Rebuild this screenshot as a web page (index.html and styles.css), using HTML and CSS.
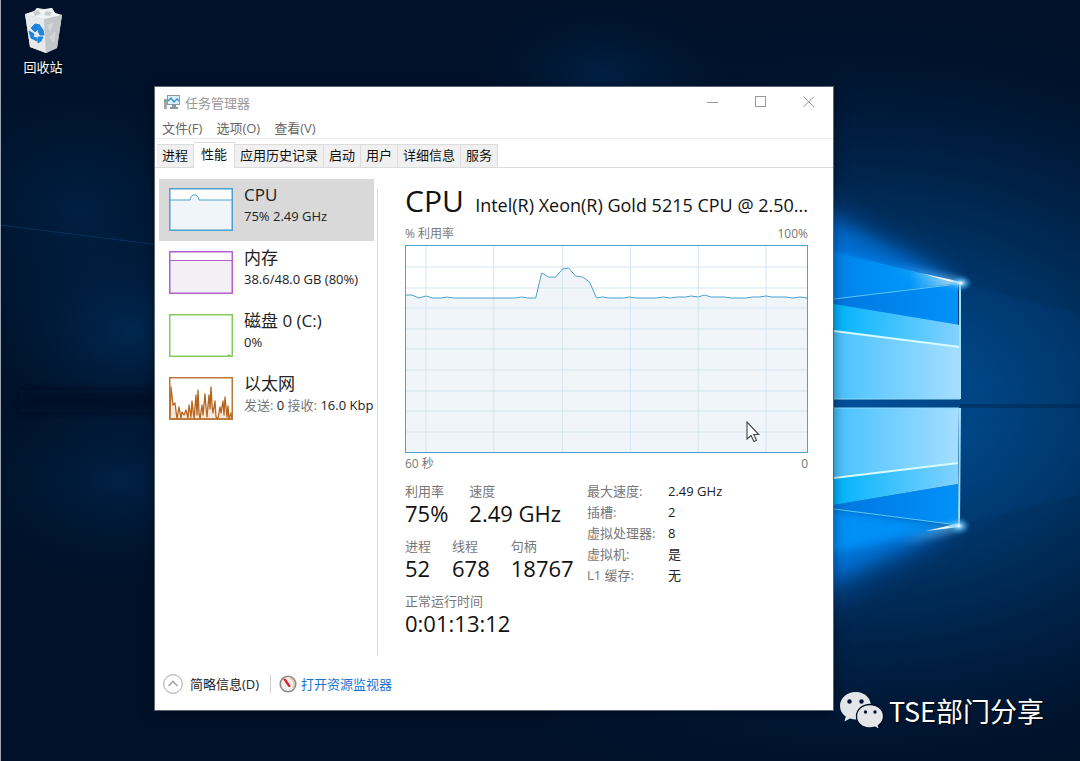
FILE: index.html
```
<!DOCTYPE html>
<html lang="zh-CN">
<head>
    <meta charset="UTF-8">
    <meta name="viewport" content="width=device-width, initial-scale=1.0">
    <title>任务管理器</title>
    <link rel="stylesheet" href="styles.css">
</head>
<body>

<div class="desktop">
    <svg class="wallpaper" viewBox="0 0 1080 761" preserveAspectRatio="xMaxYMid slice" aria-hidden="true">
        <defs>
            <radialGradient id="glow" gradientUnits="userSpaceOnUse" cx="850" cy="405" r="620" gradientTransform="translate(850 405) scale(1 .66) translate(-850 -405)">
                <stop offset="0" stop-color="#00509a"/>
                <stop offset=".2" stop-color="#004482"/>
                <stop offset=".4" stop-color="#003263"/>
                <stop offset=".7" stop-color="#001d40" stop-opacity=".8"/>
                <stop offset="1" stop-color="#001129" stop-opacity="0"/>
            </radialGradient>
            <radialGradient id="haze">
                <stop offset="0" stop-color="#003468" stop-opacity=".8"/>
                <stop offset="1" stop-color="#002040" stop-opacity="0"/>
            </radialGradient>
            <linearGradient id="pane" gradientUnits="userSpaceOnUse" x1="834" x2="960" y1="0" y2="0">
                <stop offset="0" stop-color="#48c2ff"/>
                <stop offset="1" stop-color="#a6deff"/>
            </linearGradient>
            <linearGradient id="band" gradientUnits="userSpaceOnUse" x1="834" x2="960" y1="0" y2="0">
                <stop offset="0" stop-color="#00b4fc"/>
                <stop offset="1" stop-color="#84d2ff"/>
            </linearGradient>
            <linearGradient id="deep" gradientUnits="userSpaceOnUse" x1="834" x2="960" y1="0" y2="0">
                <stop offset="0" stop-color="#0076e0"/>
                <stop offset="1" stop-color="#0092fa"/>
            </linearGradient>
            <linearGradient id="beam" x1="0" x2="1" y1="0" y2="0">
                <stop offset="0" stop-color="#0084ee"/>
                <stop offset=".6" stop-color="#00a0ff"/>
                <stop offset="1" stop-color="#d8f4ff"/>
            </linearGradient>
            <radialGradient id="spark">
                <stop offset="0" stop-color="#ffffff"/>
                <stop offset=".3" stop-color="#7fd4ff" stop-opacity=".7"/>
                <stop offset="1" stop-color="#0080e0" stop-opacity="0"/>
            </radialGradient>
            <filter id="wide" x="-40%" y="-40%" width="180%" height="180%"><feGaussianBlur stdDeviation="16"/></filter>
            <filter id="soft" x="-30%" y="-30%" width="160%" height="160%"><feGaussianBlur stdDeviation="9"/></filter>
            <filter id="soften" x="-30%" y="-30%" width="160%" height="160%"><feGaussianBlur stdDeviation="4"/></filter>
        </defs>
        <rect width="1080" height="761" fill="#001129"/>
        <rect width="1080" height="761" fill="url(#glow)"/>
        <ellipse cx="600" cy="75" rx="130" ry="80" fill="url(#haze)" opacity=".5"/>
        <ellipse cx="130" cy="330" rx="160" ry="120" fill="url(#haze)" opacity=".8"/>
        <ellipse cx="80" cy="210" rx="190" ry="150" fill="url(#haze)" opacity=".5"/>
        <ellipse cx="120" cy="480" rx="170" ry="110" fill="url(#haze)" opacity=".55"/>
        <path d="M0 225L160 245" stroke="#0a3c6c" stroke-width="1" opacity=".7"/>
        <path d="M20 390H160V412H20z" fill="#000e24" opacity=".75" filter="url(#soften)"/>
        <path d="M960 283L1080 314V495L959 525z" fill="#0058a8" opacity=".1"/>
        <path d="M960 404H1080V408H960z" fill="#00264e" opacity=".5"/>
        <!-- light spilling past the frame -->
        <path d="M760 170L950 280L760 330z" fill="#0058b0" opacity=".7" filter="url(#wide)"/>
        <path d="M760 490L950 527L760 640z" fill="#0058b0" opacity=".7" filter="url(#wide)"/>
        <path d="M780 195L957 282L780 330z" fill="#0072d8" opacity=".85" filter="url(#soft)"/>
        <path d="M780 490L955 526L780 602z" fill="#0078e0" opacity=".85" filter="url(#soft)"/>
        <path d="M790 238L961 283L790 310z" fill="#0084ee" opacity=".8" filter="url(#soften)"/>
        <path d="M790 505L959 525L790 562z" fill="#0098ff" opacity=".8" filter="url(#soften)"/>
        <path d="M834 252L961 283L834 299z" fill="url(#beam)" opacity=".75"/>
        <path d="M780 305L958 284V399H780z" fill="url(#deep)"/>
        <path d="M780 295L960 325V347L780 324z" fill="url(#band)"/>
        <path d="M780 324L960 347V399H780z" fill="url(#pane)"/>
        <path d="M780 502L958 525V484L780 514z" fill="url(#deep)"/>
        <path d="M780 485L958 463V484L780 514z" fill="url(#band)"/>
        <path d="M780 408H959L958 463L780 485z" fill="url(#pane)"/>
        <path d="M834 299L958 284M834 509L958 525" stroke="#5cc8ff" stroke-width="1"/>
        <path d="M834 331L960 347M834 478L958 463" stroke="#d6fbff" stroke-width="2"/>
        <path d="M834 399H960M834 408H959" stroke="#8fdcff" stroke-width="1"/>
        <path d="M960 283V399M960 408L959 525" stroke="#9fe0ff" stroke-width="2"/>
        <path d="M895 267L962 281V286z" fill="#c8f0ff" filter="url(#soften)" opacity=".8"/>
        <path d="M900 543L960 528V523z" fill="#c8f0ff" filter="url(#soften)" opacity=".8"/>
        <path d="M920 273L962 282V285z" fill="#e8faff"/>
        <path d="M926 531L960 527V523z" fill="#e8faff"/>
        <ellipse cx="961" cy="283" rx="12" ry="8" fill="url(#spark)"/>
        <ellipse cx="959" cy="526" rx="12" ry="9" fill="url(#spark)"/>
    </svg>

    <a class="desktop-icon" href="#">
        <svg width="40" height="46" viewBox="0 0 40 46" aria-hidden="true">
            <path d="M2 7L11 4L14 1L21 2L29 1L32 6L39 8L34 41L23 46L7 40z" fill="#d6d9dc"/>
            <path d="M2 7L21 12L23 46L7 40z" fill="#e6e8ea"/>
            <path d="M21 12L39 8L34 41L23 46z" fill="#c2c5c9"/>
            <path d="M3 7L12 4L14 1L20 3L29 1L32 6L38 8L21 12z" fill="#f2f3f4"/>
            <path d="M10 5L15 3L18 7L12 9zM23 4L29 5L27 9L21 8z" fill="#c9cdd0"/>
            <path d="M24 18L31 15L27 25zM26 30L33 24L31 36z" fill="#d3d6d9"/>
            <path d="M8 21L12 17L17 18L15 22L12 25zM17 19L20 23L21 28L17 28L15 24zM6 24L11 27L10 30L14 31V34L8 31zM15 30L20 30L18 34L15 36z" fill="#1a84dc" stroke="#1a84dc" stroke-linejoin="round"/>
        </svg>
        <span>回收站</span>
    </a>

    <main class="window">
        <header class="title-bar">
            <svg class="app-icon" width="18" height="16" viewBox="0 0 18 16" aria-hidden="true">
                <path d="M1 5H4V15H1z" fill="#a2a8ac"/>
                <path d="M1 6H3V8H1z" fill="#58b858"/>
                <rect x="4.500" y="1.500" width="12" height="9" fill="#d9f0fc" stroke="#8d979e"/>
                <path d="M5 7L8 4L11 8L14 5L16 7" fill="none" stroke="#2e93cf" stroke-width="1.300"/>
                <path d="M9 11H13V13H15V15H7V13H9z" fill="#8d979e"/>
            </svg>
            <h1>任务管理器</h1>
            <div class="window-buttons">
                <button type="button" aria-label="最小化"><svg width="12" height="12"><path d="M0 6.500H11" stroke="#999"/></svg></button>
                <button type="button" aria-label="最大化"><svg width="12" height="12"><rect x=".5" y=".5" width="10" height="10" fill="none" stroke="#999"/></svg></button>
                <button type="button" aria-label="关闭"><svg width="12" height="12"><path d="M.5 .5L11 11M11 .5L.5 11" stroke="#999"/></svg></button>
            </div>
        </header>

        <nav class="menu-bar">
            <button type="button">文件(F)</button>
            <button type="button">选项(O)</button>
            <button type="button">查看(V)</button>
        </nav>

        <div class="tabs" role="tablist">
            <button type="button" role="tab">进程</button>
            <button type="button" role="tab" class="active" aria-selected="true">性能</button>
            <button type="button" role="tab">应用历史记录</button>
            <button type="button" role="tab">启动</button>
            <button type="button" role="tab">用户</button>
            <button type="button" role="tab">详细信息</button>
            <button type="button" role="tab">服务</button>
        </div>

        <div class="content">
            <aside class="sidebar">
                <button type="button" class="resource selected">
                    <svg class="thumb" viewBox="0 0 64 43" aria-hidden="true">
                        <rect x="1" y="1" width="62" height="41" fill="#fff"/>
                        <path d="M1 12H21C22 5 29 5 30 12H63V42H1z" fill="#f0f5fa"/>
                        <path d="M1 12H21C22 5 29 5 30 12H63" fill="none" stroke="#4da0cf"/>
                        <rect x=".75" y=".75" width="62.500" height="41.500" fill="none" stroke="#4da0cf" stroke-width="1.500"/>
                    </svg>
                    <span class="resource-text">
                        <span class="name">CPU</span>
                        <span class="value">75% 2.49 GHz</span>
                    </span>
                </button>
                <button type="button" class="resource">
                    <svg class="thumb" viewBox="0 0 64 43" aria-hidden="true">
                        <rect x="1" y="9" width="62" height="33" fill="#f3f0f5"/>
                        <path d="M1 9.500H63" stroke="#b45fcb"/>
                        <rect x=".75" y=".75" width="62.500" height="41.500" fill="none" stroke="#b45fcb" stroke-width="1.500"/>
                    </svg>
                    <span class="resource-text">
                        <span class="name">内存</span>
                        <span class="value">38.6/48.0 GB (80%)</span>
                    </span>
                </button>
                <button type="button" class="resource">
                    <svg class="thumb" viewBox="0 0 64 43" aria-hidden="true">
                        <path d="M58 42L60 40L62 42z" fill="#77c04b"/>
                        <rect x=".75" y=".75" width="62.500" height="41.500" fill="none" stroke="#84cc5b" stroke-width="1.500"/>
                    </svg>
                    <span class="resource-text">
                        <span class="name">磁盘 0 (C:)</span>
                        <span class="value">0%</span>
                    </span>
                </button>
                <button type="button" class="resource">
                    <svg class="thumb" viewBox="0 0 64 43" aria-hidden="true">
                        <path d="M1 40L2 10L4 28L6 26L8 42L10 30L12 41L13 35L15 38L17 33L19 41L20 28L22 40L23 24L25 42L27 18L28 38L29 13L30 36L31 42L33 28L34 38L36 17L37 30L38 40L40 18L41 32L42 10L43 28L44 36L46 24L47 40L49 41L51 30L52 36L54 24L55 38L56 20L58 40L59 29L60 42L62 36L63 42H1z" fill="#f8e9dc" stroke="#b5651d" stroke-width="1.300" stroke-linejoin="round"/>
                        <rect x=".75" y=".75" width="62.500" height="41.500" fill="none" stroke="#bd7738" stroke-width="1.500"/>
                    </svg>
                    <span class="resource-text">
                        <span class="name">以太网</span>
                        <span class="value"><i>发送:</i> 0 <i>接收:</i> 16.0 Kbp</span>
                    </span>
                </button>
            </aside>

            <section class="detail">
                <div class="detail-head">
                    <h2>CPU</h2>
                    <p>Intel(R) Xeon(R) Gold 5215 CPU @ 2.50...</p>
                </div>
                <div class="axis"><span>% 利用率</span><span>100%</span></div>
                <div class="chart">
                    <svg viewBox="0 0 402 206" preserveAspectRatio="none" aria-label="% 利用率">
                        <path d="M0 49L6 49L13 52L20 50L27 52H35L41 51L48 52H109L116 51L122 52H130L136 27L143 31H150L157 23L163 22L170 30L177 31L184 36L191 52L197 51L204 52H218L224 51L231 52H251L258 51L265 52L272 51H280L286 50L293 51L299 49L306 51H319L326 52H341L347 51H354L361 50L367 51H381L388 52L395 51L402 52V206H0z" fill="#f0f5fa"/>
                        <path class="grid" d="M20 0V206M88 0V206M157 0V206M225 0V206M293 0V206M361 0V206M0 21H402M0 42H402M0 62H402M0 83H402M0 103H402M0 124H402M0 145H402M0 165H402M0 186H402"/>
                        <path class="line" d="M0 49L6 49L13 52L20 50L27 52H35L41 51L48 52H109L116 51L122 52H130L136 27L143 31H150L157 23L163 22L170 30L177 31L184 36L191 52L197 51L204 52H218L224 51L231 52H251L258 51L265 52L272 51H280L286 50L293 51L299 49L306 51H319L326 52H341L347 51H354L361 50L367 51H381L388 52L395 51L402 52"/>
                    </svg>
                </div>
                <div class="axis"><span>60 秒</span><span>0</span></div>

                <div class="stats">
                    <div class="counters">
                        <div class="counter-row">
                            <dl><dt>利用率</dt><dd>75%</dd></dl>
                            <dl><dt>速度</dt><dd>2.49 GHz</dd></dl>
                        </div>
                        <div class="counter-row">
                            <dl><dt>进程</dt><dd>52</dd></dl>
                            <dl><dt>线程</dt><dd>678</dd></dl>
                            <dl><dt>句柄</dt><dd>18767</dd></dl>
                        </div>
                        <div class="counter-row">
                            <dl><dt>正常运行时间</dt><dd>0:01:13:12</dd></dl>
                        </div>
                    </div>
                    <table class="specs">
                        <tr><th scope="row">最大速度:</th><td>2.49 GHz</td></tr>
                        <tr><th scope="row">插槽:</th><td>2</td></tr>
                        <tr><th scope="row">虚拟处理器:</th><td>8</td></tr>
                        <tr><th scope="row">虚拟机:</th><td>是</td></tr>
                        <tr><th scope="row">L1 缓存:</th><td>无</td></tr>
                    </table>
                </div>
            </section>
        </div>

        <footer class="status-bar">
            <button type="button" class="fewer">
                <svg width="20" height="20" viewBox="0 0 20 20" aria-hidden="true">
                    <circle cx="10" cy="10" r="9.300" fill="#fff" stroke="#a5a5a5"/>
                    <path d="M5.500 12L10 7.500L14.500 12" fill="none" stroke="#a5a5a5" stroke-width="1.600"/>
                </svg>
                简略信息(D)
            </button>
            <a class="monitor" href="#">
                <svg width="18" height="18" viewBox="0 0 18 18" aria-hidden="true">
                    <circle cx="9" cy="9" r="7.800" fill="#f1efec" stroke="#8b8b8b" stroke-width="1.600"/>
                    <path d="M11 3A6.500 6.500 0 0 1 14 13" fill="none" stroke="#e5b98a" stroke-width="1.300"/>
                    <path d="M4 4L6.500 3.500L12 11.500L9.500 12z" fill="#d8232a"/>
                </svg>
                <span>打开资源监视器</span>
            </a>
        </footer>
    </main>

    <svg class="cursor" width="14" height="22" viewBox="0 0 14 22" aria-hidden="true">
        <path d="M1 1V18L5 14.500L8 20.500L10.500 19.300L7.800 13.500H12.800z" fill="#fff" stroke="#444" stroke-width="1.100"/>
    </svg>

    <div class="watermark">
        <svg width="44" height="38" viewBox="0 0 44 38" aria-hidden="true">
            <path d="M16 0C7 0 0 6 0 14C0 18.500 2.200 22 5.800 24.500L4.500 29.500L10 26.600C12 27.200 14 27.500 16 27.500C25 27.500 31 21.500 31 14S25 0 16 0z" fill="#e4e5e9"/>
            <path d="M30 12.500C22.500 12.500 16.500 17.500 16.500 24.300S22.500 36 30 36C31.800 36 33.400 35.700 35 35.200L39.500 37.500L38.400 33.500C41.500 31.300 43.500 28 43.500 24.300C43.500 17.500 37.500 12.500 30 12.500z" fill="#e4e5e9" stroke="#000f27" stroke-width="1.300"/>
            <circle cx="9.500" cy="9.500" r="2.200" fill="#001532"/>
            <circle cx="21.500" cy="9.500" r="2.200" fill="#001532"/>
            <circle cx="25.500" cy="20" r="1.700" fill="#001532"/>
            <circle cx="35" cy="20" r="1.700" fill="#001532"/>
        </svg>
        <span>TSE部门分享</span>
    </div>
</div>

</body>
</html>
```
FILE: styles.css
```
* {
    box-sizing: border-box;
}
body {
    margin: 0;
    font-family: "Open Sans", "Noto Sans CJK SC", sans-serif;
    font-size: 13px;
    color: #222;
}
h1, h2, p, dl, dd {
    margin: 0;
    font-weight: normal;
}
button {
    font: inherit;
    color: inherit;
    padding: 0;
    border: none;
    background: none;
    cursor: pointer;
}
.desktop {
    position: relative;
    min-height: 100vh;
    overflow: hidden;
    border-left: 1px solid #9aa3ad;
    background: #001129;
}
.wallpaper {
    position: absolute;
    inset: 0;
    width: 100%;
    height: 100%;
}

/* desktop shortcut */
.desktop-icon {
    position: absolute;
    top: 7px;
    left: 12px;
    width: 60px;
    display: flex;
    flex-direction: column;
    align-items: center;
    gap: 4px;
    line-height: 20px;
    color: #fff;
    text-decoration: none;
    text-shadow: 0 1px 2px #000;
}

/* task manager window */
.window {
    position: absolute;
    top: 87px;
    right: 247px;
    bottom: 51px;
    left: 154px;
    display: flex;
    flex-direction: column;
    background: #fff;
    box-shadow: 0 0 0 1px #5b6672, 0 2px 12px rgba(0, 0, 0, 0.5);
}
.title-bar {
    display: flex;
    align-items: center;
    height: 30px;
    padding-left: 8px;
    color: #999;
}
.title-bar h1 {
    margin-left: 4px;
    font-size: 13px;
}
.window-buttons {
    display: flex;
    margin-left: auto;
}
.window-buttons button {
    display: flex;
    align-items: center;
    justify-content: center;
    width: 48px;
    height: 30px;
}
.menu-bar {
    display: flex;
    gap: 14px;
    height: 22px;
    padding-left: 7px;
    color: #666;
    border-bottom: 1px solid #ececec;
}
.tabs {
    display: flex;
    align-items: flex-end;
    height: 29px;
    padding-left: 2px;
    color: #111;
    border-bottom: 1px solid #dcdcdc;
}
.tabs button {
    height: 23px;
    padding: 0 5px 2px;
    line-height: 20px;
    background: #f0f0f0;
    border-top: 1px solid #dcdcdc;
    border-right: 1px solid #dcdcdc;
}
.tabs .active {
    height: 26px;
    padding: 0 7px 4px;
    margin-bottom: -1px;
    background: #fff;
}

.content {
    display: flex;
    flex: 1;
    padding-right: 25px;
}
.sidebar {
    display: flex;
    flex: none;
    flex-direction: column;
    gap: 1px;
    width: 222px;
    padding: 11px 0 0 4px;
}
.resource {
    display: flex;
    align-items: flex-start;
    gap: 11px;
    width: 215px;
    height: 62px;
    padding: 9px 0 0 10px;
    text-align: left;
}
.resource.selected {
    background: #d9d9d9;
}
.thumb {
    flex: none;
    width: 64px;
    height: 43px;
}
.resource-text {
    display: flex;
    flex-direction: column;
    white-space: nowrap;
    margin-top: -4px;
}
.name {
    font-size: 17px;
    line-height: 22px;
}
.value {
    line-height: 20px;
}
.value i {
    font-style: normal;
    color: #777;
}

.detail {
    flex: 1;
    min-width: 0;
    margin-top: 21px;
    margin-bottom: 8px;
    padding-left: 27px;
    border-left: 1px solid #d9d9d9;
}
.detail-head {
    display: flex;
    align-items: baseline;
    justify-content: space-between;
    height: 34px;
    white-space: nowrap;
    color: #111;
}
.detail-head h2 {
    font-size: 30px;
    line-height: 24px;
}
.detail-head p {
    font-size: 18px;
    line-height: 24px;
}
.axis {
    display: flex;
    justify-content: space-between;
    font-size: 12px;
    line-height: 22px;
    color: #777;
}
.chart {
    height: 208px;
    border: 1px solid #4da0cf;
}
.chart svg {
    display: block;
    width: 100%;
    height: 100%;
}
.grid {
    fill: none;
    stroke: #d3e6f1;
}
.line {
    fill: none;
    stroke: #4da0cf;
}
.stats {
    display: flex;
    margin-top: 6px;
}
.counters {
    display: flex;
    flex-direction: column;
    gap: 11px;
    width: 182px;
}
.counter-row {
    display: flex;
    gap: 21px;
}
dt, th {
    font-weight: normal;
    color: #777;
}
dt {
    line-height: 20px;
}
dd {
    font-size: 22px;
    line-height: 24px;
    color: #111;
    white-space: nowrap;
}
.specs {
    align-self: flex-start;
    border-collapse: collapse;
    line-height: 21px;
    text-align: left;
}
.specs th {
    width: 81px;
    padding: 0;
}
.specs td {
    padding: 0;
}

.status-bar {
    display: flex;
    align-items: center;
    height: 47px;
    padding: 0 8px 6px;
}
.fewer {
    display: flex;
    align-items: center;
    gap: 7px;
}
.monitor {
    display: flex;
    align-items: center;
    gap: 4px;
    margin-left: 11px;
    padding-left: 8px;
    line-height: 16px;
    color: #1874d2;
    text-decoration: none;
    border-left: 1px solid #d0d0d0;
}
.monitor:hover {
    text-decoration: underline;
}

.cursor {
    position: absolute;
    top: 421px;
    left: 745px;
}
.watermark {
    position: absolute;
    right: 36px;
    bottom: 31px;
    display: flex;
    align-items: center;
    gap: 5px;
    font-family: "Noto Sans CJK SC", sans-serif;
    font-size: 27px;
    line-height: 38px;
    color: #fff;
    text-shadow: 1px 1px 1px #000;
}
```
